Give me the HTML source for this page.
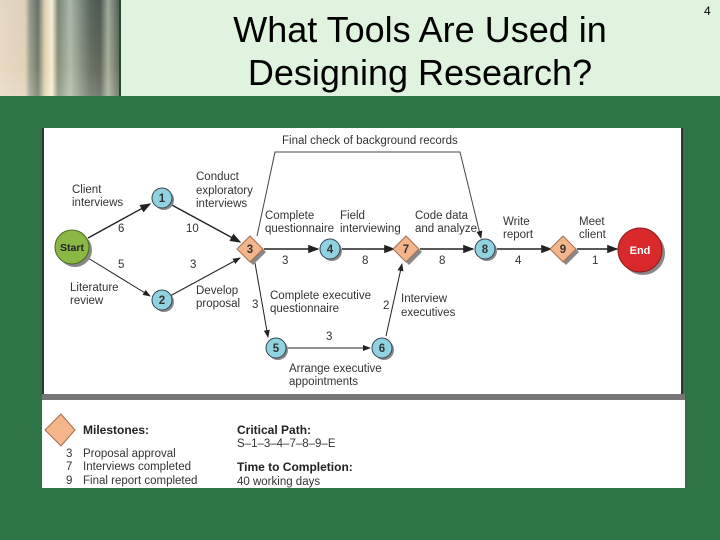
<!DOCTYPE html>
<html><head><style>
body{margin:0;width:720px;height:540px;background:#2e7545;overflow:hidden;position:relative;font-family:"Liberation Sans",sans-serif}
.hdr{position:absolute;left:0;top:0;width:720px;height:96px;background:#dff3df}
.photo{position:absolute;left:0;top:0;width:119px;height:96px;background:linear-gradient(90deg,#e0d2bc 0,#d8c8b0 25px,#7b8778 30px,#4a564c 38px,#d8c8a8 45px,#f6ead0 52px,#607060 58px,#9aaa9a 70px,#3a4a40 90px,#2c3a32 100px,#8c9a88 108px,#3a4a3c 118px)}
.photo2{position:absolute;left:0;top:0;width:119px;height:96px;background:linear-gradient(180deg,rgba(255,255,255,.15),rgba(255,240,210,.25) 70%,rgba(255,250,230,.35))}
.sep{position:absolute;left:119px;top:0;width:2px;height:96px;background:#1f4a2c}
.title{position:absolute;left:170px;top:8px;width:500px;text-align:center;font-size:36px;line-height:43px;color:#000}
.num{position:absolute;left:704px;top:4px;font-size:12px}
svg{position:absolute;left:0;top:0}
svg text{font-family:"Liberation Sans",sans-serif;font-size:11.5px;fill:#333}
</style></head><body>
<div class="hdr"></div><div class="photo"></div><div class="photo2"></div><div class="sep"></div>
<div class="title">What Tools Are Used in<br>Designing Research?</div>
<div class="num">4</div>
<svg width="720" height="540">
<defs><marker id="a" markerWidth="8" markerHeight="6" refX="7" refY="3" orient="auto"><path d="M0,0L8,3L0,6z" fill="#222"/></marker></defs>
<rect x="42" y="128" width="641" height="268" fill="#fff"/>
<rect x="42" y="128" width="2" height="268" fill="#333"/>
<rect x="681" y="128" width="2" height="268" fill="#333"/>
<rect x="42" y="394" width="643" height="6" fill="#777"/>
<rect x="42" y="400" width="643" height="88" fill="#fff"/>
<g stroke="#222" fill="none" marker-end="url(#a)">
<path d="M88,238L150,204" stroke-width="1.4"/>
<path d="M170,204L240,242" stroke-width="1.4"/>
<path d="M88,258L150,296" stroke-width="1"/>
<path d="M170,296L240,258" stroke-width="1"/>
<path d="M264,249L318,249" stroke-width="1.4"/>
<path d="M342,249L394,249" stroke-width="1.4"/>
<path d="M420,249L473,249" stroke-width="1.4"/>
<path d="M497,249L551,249" stroke-width="1.4"/>
<path d="M577,249L617,249" stroke-width="1.4"/>
<path d="M255,263L268,337" stroke-width="1"/>
<path d="M287,348L370,348" stroke-width="1"/>
<path d="M386,336L402,264" stroke-width="1"/>
<path d="M257,236L275,152L460,152L481,238" stroke-width="1" stroke="#444"/>
</g>
<circle cx="75" cy="250" r="17" fill="#888"/><circle cx="72" cy="247" r="17" fill="#8bb845" stroke="#4a6a20"/>
<text x="72" y="251" text-anchor="middle" style="font-weight:bold;font-size:10.5px;fill:#222">Start</text>
<circle cx="643" cy="253" r="22" fill="#888"/><circle cx="640" cy="250" r="22" fill="#d9292b" stroke="#901818"/>
<text x="640" y="254" text-anchor="middle" style="font-weight:bold;font-size:11px;fill:#fff">End</text>
<g stroke="#345" stroke-width="1">
<circle cx="164" cy="200" r="10" fill="#888" stroke="none"/><circle cx="162" cy="198" r="10" fill="#8fd3e0"/>
<circle cx="164" cy="302" r="10" fill="#888" stroke="none"/><circle cx="162" cy="300" r="10" fill="#8fd3e0"/>
<circle cx="332" cy="251" r="10" fill="#888" stroke="none"/><circle cx="330" cy="249" r="10" fill="#8fd3e0"/>
<circle cx="487" cy="251" r="10" fill="#888" stroke="none"/><circle cx="485" cy="249" r="10" fill="#8fd3e0"/>
<circle cx="278" cy="350" r="10" fill="#888" stroke="none"/><circle cx="276" cy="348" r="10" fill="#8fd3e0"/>
<circle cx="384" cy="350" r="10" fill="#888" stroke="none"/><circle cx="382" cy="348" r="10" fill="#8fd3e0"/>
<path d="M253,239L266,252L253,265L240,252z" fill="#888" stroke="none"/><path d="M250,236L263,249L250,262L237,249z" fill="#f5b58a" stroke="#a07050"/>
<path d="M409,239L422,252L409,265L396,252z" fill="#888" stroke="none"/><path d="M406,236L419,249L406,262L393,249z" fill="#f5b58a" stroke="#a07050"/>
<path d="M566,239L579,252L566,265L553,252z" fill="#888" stroke="none"/><path d="M563,236L576,249L563,262L550,249z" fill="#f5b58a" stroke="#a07050"/>
<path d="M61,414L75,430L61,446L45,430z" fill="#f5b58a" stroke="#a07050"/>
</g>
<g style="font-weight:bold;font-size:10px" text-anchor="middle">
<text x="162" y="202">1</text><text x="162" y="304">2</text><text x="250" y="253">3</text><text x="330" y="253">4</text>
<text x="276" y="352">5</text><text x="382" y="352">6</text><text x="406" y="253">7</text><text x="485" y="253">8</text><text x="563" y="253">9</text>
</g>
<text x="282" y="144">Final check of background records</text>
<text x="72" y="193">Client</text><text x="72" y="206">interviews</text>
<text x="196" y="180">Conduct</text><text x="196" y="194">exploratory</text><text x="196" y="207">interviews</text>
<text x="118" y="232">6</text><text x="186" y="232">10</text>
<text x="118" y="268">5</text><text x="190" y="268">3</text>
<text x="70" y="291">Literature</text><text x="70" y="304">review</text>
<text x="196" y="294">Develop</text><text x="196" y="307">proposal</text>
<text x="252" y="308">3</text>
<text x="265" y="219">Complete</text><text x="265" y="232">questionnaire</text>
<text x="340" y="219">Field</text><text x="340" y="232">interviewing</text>
<text x="415" y="219">Code data</text><text x="415" y="232">and analyze</text>
<text x="503" y="225">Write</text><text x="503" y="238">report</text>
<text x="579" y="225">Meet</text><text x="579" y="238">client</text>
<text x="282" y="264">3</text><text x="362" y="264">8</text><text x="439" y="264">8</text><text x="515" y="264">4</text><text x="592" y="264">1</text>
<text x="270" y="299">Complete executive</text><text x="270" y="312">questionnaire</text>
<text x="383" y="309">2</text>
<text x="401" y="302">Interview</text><text x="401" y="316">executives</text>
<text x="326" y="340">3</text>
<text x="289" y="372">Arrange executive</text><text x="289" y="385">appointments</text>
<text x="83" y="434" style="font-weight:bold;font-size:12px;fill:#222">Milestones:</text>
<text x="66" y="457">3</text><text x="83" y="457">Proposal approval</text>
<text x="66" y="470">7</text><text x="83" y="470">Interviews completed</text>
<text x="66" y="484">9</text><text x="83" y="484">Final report completed</text>
<text x="237" y="434" style="font-weight:bold;font-size:12px;fill:#222">Critical Path:</text>
<text x="237" y="447">S–1–3–4–7–8–9–E</text>
<text x="237" y="471" style="font-weight:bold;font-size:12px;fill:#222">Time to Completion:</text>
<text x="237" y="485">40 working days</text>
</svg>
</body></html>
